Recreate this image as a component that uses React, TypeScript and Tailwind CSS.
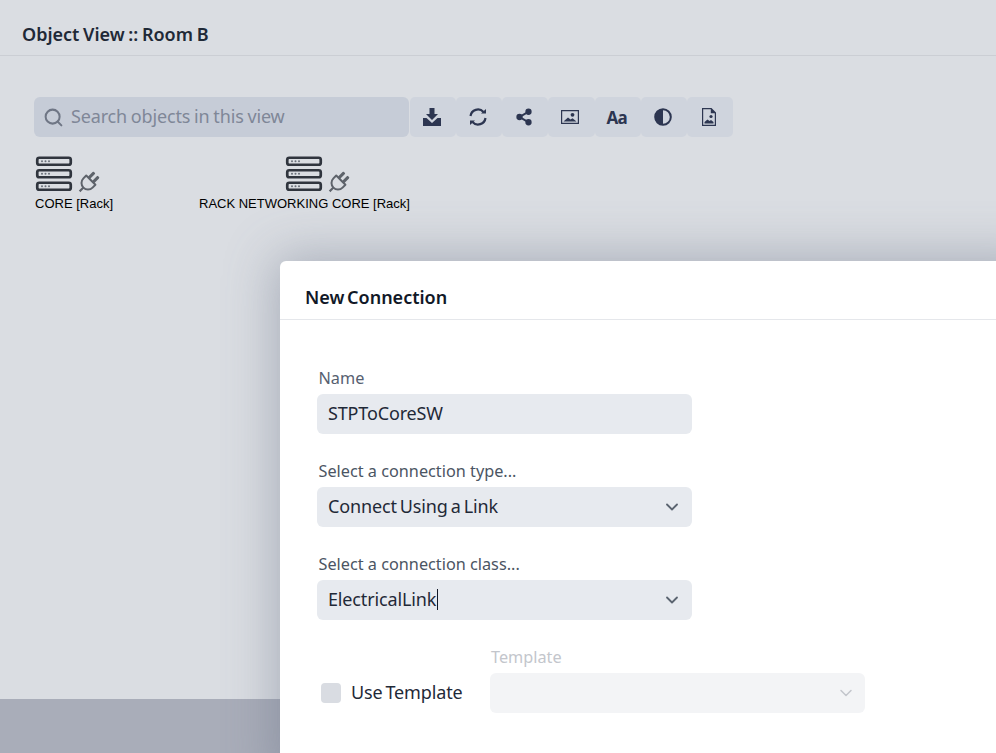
import { ChevronDown, Search, Share2 } from "lucide-react";
import type { ReactNode } from "react";

function ServerIcon() {
  return (
    <svg width="38" height="38" viewBox="0 0 38 38" fill="none" className="block">
      {[2.75, 15.25, 27.75].map((y) => (
        <g key={y}>
          <rect x="2.25" y={y} width="33.5" height="7" rx="2" stroke="#30353e" strokeWidth="2.7" />
          <circle cx="7" cy={y + 3.5} r="1" fill="#6a707a" />
          <circle cx="10.5" cy={y + 3.5} r="1" fill="#6a707a" />
          <circle cx="14" cy={y + 3.5} r="1" fill="#6a707a" />
        </g>
      ))}
    </svg>
  );
}

function PlugIcon() {
  return (
    <svg width="24" height="24" viewBox="0 0 24 24" fill="none" stroke="#5e636b" className="ml-[3px] -mb-[2px] rotate-45">
      <path d="M9 1v6M15 1v6" strokeWidth="3" strokeLinecap="round" />
      <path d="M5.500 8h13v4a6.500 6.500 0 0 1-13 0z" strokeWidth="2" strokeLinejoin="round" />
      <path d="M12 18.500V24" strokeWidth="2.200" />
    </svg>
  );
}

function RackNode({ name, className }: { name: string; className: string }) {
  return (
    <div className={`absolute top-[155px] ${className}`}>
      <div className="flex items-end">
        <ServerIcon />
        <PlugIcon />
      </div>
      <p className="mt-[3px] whitespace-nowrap font-['Liberation_Sans',Arial,sans-serif] text-[13px] leading-[16px] text-black">
        {name}
      </p>
    </div>
  );
}

function ToolButton({ children }: { children: ReactNode }) {
  return (
    <button className="flex h-10 w-[46.150px] items-center justify-center rounded-[5px] bg-[#cfd4dd] pr-[2px] text-[#2d3651]">
      {children}
    </button>
  );
}

function Field({ label, value, caret, labelColor }: { label: string; value: string; caret?: boolean; labelColor: string }) {
  return (
    <div className="w-[375px]">
      <label className={`mb-[4px] block pl-[1.500px] text-[16.250px] leading-[24px] ${labelColor}`}>{label}</label>
      <div className="flex h-10 items-center justify-between rounded-md bg-[#e7eaef] pb-[2px] pl-[11px] pr-[10px] text-[18px] tracking-[-0.15px] text-[#1f2937] [word-spacing:-1.500px]">
        <span className="flex items-center">
          {value}
          {caret && <span className="ml-[1px] inline-block h-[21px] w-px bg-[#111827]" />}
        </span>
      </div>
    </div>
  );
}

function SelectField({ label, value, caret }: { label: string; value: string; caret?: boolean }) {
  return (
    <div className="relative mt-[25px] w-[375px]">
      <Field label={label} value={value} caret={caret} labelColor="text-[#4b5563]" />
      <ChevronDown size={20} strokeWidth={2.200} className="absolute right-[10px] top-[38px] text-[#5b6470]" />
    </div>
  );
}

export default function App() {
  return (
    <div className="relative flex h-[753px] w-full flex-col overflow-hidden bg-[#dadde2] font-['Noto_Sans',sans-serif]">
      <header className="flex h-[56px] shrink-0 items-center border-b border-[#cbced4] pl-[22px] pt-[13px]">
        <h1 className="text-[18px] font-semibold text-[#1f2937] [word-spacing:-1px]">Object View :: Room B</h1>
      </header>

      <main className="flex-1 pl-[34px] pt-[41px]">
        <div className="flex items-center gap-px">
          <div className="flex h-10 w-[375px] items-center rounded-md bg-[#c6ccd7] pl-[9px]">
            <Search size={21} strokeWidth={2.300} className="text-[#6f7685]" />
            <span className="-mt-[2px] ml-[7px] text-[18px] tracking-[-0.15px] text-[#7f8797] [word-spacing:-0.750px]">Search objects in this view</span>
          </div>
          <div className="flex">
            <ToolButton>
              <svg width="18" height="18" viewBox="0 0 18 18" fill="currentColor">
                <path d="M6.500 0h5v6H15l-6 6-6-6h3.500z" />
                <path d="M0 10h3.500L9 15l5.500-5H18v8H0z" />
              </svg>
            </ToolButton>
            <ToolButton>
              <svg width="20" height="20" viewBox="0 0 20 20" fill="none" stroke="currentColor" strokeWidth="2.200">
                <path d="M2.500 9a7.500 7.500 0 0 1 13-4" />
                <path d="M17.500 11a7.500 7.500 0 0 1-13 4" />
                <path d="M13 6.500h5V2z" fill="currentColor" stroke="none" />
                <path d="M7 13.500H2V18z" fill="currentColor" stroke="none" />
              </svg>
            </ToolButton>
            <ToolButton>
              <Share2 size={18} fill="currentColor" strokeWidth={2.400} />
            </ToolButton>
            <ToolButton>
              <svg width="18" height="14" viewBox="0 0 18 14" fill="currentColor">
                <path fillRule="evenodd" d="M0 0h18v14H0zM1.200 1.200v11.600h15.600V1.200z" />
                <circle cx="11.500" cy="4.800" r="1.900" />
                <path d="M2.500 11.500 7 7.500l2.500 2 2-1.300 4 3.300z" />
              </svg>
            </ToolButton>
            <ToolButton>
              <span className="text-[17px] font-bold leading-none tracking-[-0.8px]">Aa</span>
            </ToolButton>
            <ToolButton>
              <svg width="18" height="18" viewBox="0 0 18 18" fill="currentColor">
                <circle cx="9" cy="9" r="7.800" fill="none" stroke="currentColor" strokeWidth="2" />
                <path d="M9 1a8 8 0 0 0 0 16z" />
              </svg>
            </ToolButton>
            <ToolButton>
              <svg width="14" height="18" viewBox="0 0 14 18" fill="currentColor">
                <path fillRule="evenodd" d="M0 0h9.500L14 4.500V18H0zM1.200 1.200v15.600h11.600V5.200H8.800V1.200z" />
                <circle cx="9" cy="8.500" r="1.600" />
                <path d="M2.500 15.500v-1.500l3-2.500 2 1.500 1.500-1 2.500 2v1.500z" />
              </svg>
            </ToolButton>
          </div>
        </div>
      </main>

      <RackNode name="CORE [Rack]" className="left-[35px]" />
      <RackNode name="RACK NETWORKING CORE [Rack]" className="left-[199px] [&>div]:pl-[86px]" />

      <div className="h-[54px] shrink-0 bg-[#a9adb9]" />

      <div className="absolute left-[280px] top-[261px] h-[520px] w-[760px] rounded-md bg-white shadow-[0_0_50px_5px_rgba(100,110,130,0.42)]">
        <div className="flex h-[59px] items-center border-b border-[#e5e7eb] pl-[25px] pt-[14px]">
          <h2 className="text-[18px] font-semibold text-[#111827] [word-spacing:-2px]">New Connection</h2>
        </div>
        <div className="pl-[37px] pt-[46px]">
          <Field label="Name" value="STPToCoreSW" labelColor="text-[#566070]" />
          <SelectField label="Select a connection type..." value="Connect Using a Link" />
          <SelectField label="Select a connection class..." value="ElectricalLink" caret />
          <div className="mt-[25px] flex items-end">
            <div className="flex h-10 w-[173px] items-center pl-[4px]">
              <span className="h-5 w-5 rounded-[4px] bg-[#d9dce2]" />
              <span className="-mt-[2px] ml-[10px] text-[18px] tracking-[-0.15px] text-[#1f2937] [word-spacing:-1.500px]">Use Template</span>
            </div>
            <div className="relative w-[375px]">
              <label className="mb-[4px] block pl-[1px] text-[16.250px] leading-[24px] text-[#c3c6cc]">Template</label>
              <div className="h-10 rounded-md bg-[#f3f4f6]" />
              <ChevronDown size={20} strokeWidth={1.800} className="absolute right-[9px] top-[38px] text-[#c3c6cc]" />
            </div>
          </div>
        </div>
      </div>
    </div>
  );
}
